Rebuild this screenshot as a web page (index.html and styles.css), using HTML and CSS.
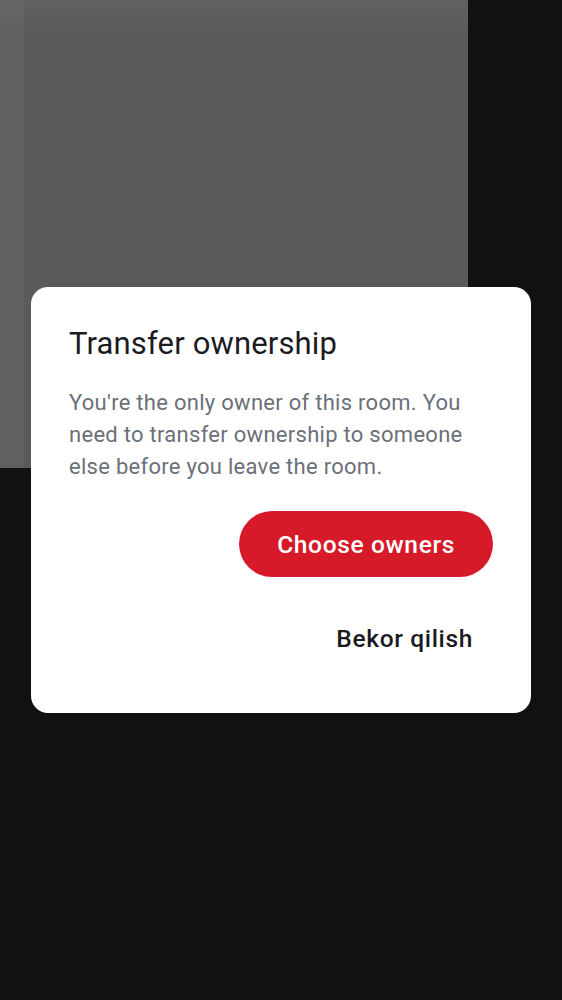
FILE: index.html
```html
<!DOCTYPE html>
<html lang="en">
<head>
<meta charset="utf-8">
<title>Transfer ownership</title>
<link rel="stylesheet" href="styles.css">
</head>
<body>
<div class="screen">
  <div class="preview"></div>
</div>
<div class="overlay">
  <div class="dialog" role="dialog" aria-labelledby="dlg-title">
    <h2 class="dialog-title" id="dlg-title">Transfer ownership</h2>
    <p class="dialog-text">You're the only owner of this room. You need to transfer ownership to someone else before you leave the room.</p>
    <div class="dialog-actions">
      <button class="btn btn-primary" type="button">Choose owners</button>
      <button class="btn btn-text" type="button">Bekor qilish</button>
    </div>
  </div>
</div>
</body>
</html>
```
FILE: styles.css
```css
html, body {
  margin: 0;
  padding: 0;
}
body {
  width: 562px;
  height: 1000px;
  background: #111111;
  font-family: Roboto, "Noto Sans", sans-serif;
  overflow: hidden;
}
.screen {
  width: 562px;
  height: 1000px;
}
.preview {
  width: 468px;
  height: 468px;
  background:
    linear-gradient(to bottom, rgba(255,255,255,0.04) 0, rgba(255,255,255,0) 40px),
    linear-gradient(to right, #606060 0, #606060 24px, #5a5a5a 24px);
}
.overlay {
  position: fixed;
  inset: 0;
  display: flex;
  align-items: center;
  justify-content: center;
}
.dialog {
  width: 500px;
  box-sizing: border-box;
  background: #ffffff;
  border-radius: 17px;
  padding: 37px 38px 47px 38px;
}
.dialog-title {
  margin: 0;
  font-size: 31px;
  line-height: 40px;
  font-weight: 400;
  letter-spacing: 0.15px;
  color: #1b1b1f;
}
.dialog-text {
  margin: 23px 0 0 0;
  font-size: 22px;
  line-height: 32px;
  color: #6b7079;
  letter-spacing: 0.28px;
}
.dialog-actions {
  margin-top: 28px;
  display: flex;
  flex-direction: column;
  align-items: flex-end;
  gap: 33px;
}
.btn {
  font-family: Roboto, "Noto Sans", sans-serif;
  font-size: 24.5px;
  font-weight: 500;
  border: none;
  cursor: pointer;
  letter-spacing: 0.65px;
  line-height: normal;
}
.btn-primary {
  height: 66px;
  padding: 0 38px;
  border-radius: 33px;
  background: #d71a2a;
  color: #ffffff;
}
.btn-text {
  height: 56px;
  padding: 0 20px;
  background: transparent;
  color: #1b1b1f;
}
```
